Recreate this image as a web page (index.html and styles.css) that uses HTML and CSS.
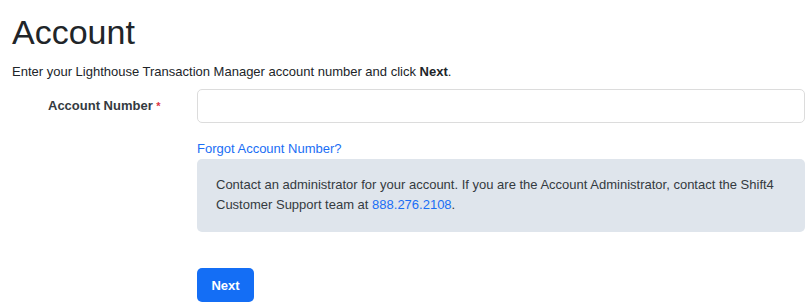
FILE: index.html
```html
<!DOCTYPE html>
<html lang="en">
  <head>
    <meta charset="UTF-8" />
    <meta name="viewport" content="width=device-width, initial-scale=1.0" />
    <title>Account</title>
    <link rel="stylesheet" href="styles.css">
  </head>
  <body>
    <div class="page">
      <h1>Account</h1>
      <p class="intro">
        Enter your Lighthouse Transaction Manager account number and click
        <strong>Next</strong>.
      </p>

      <form class="account-form" onsubmit="return false">
        <div class="form-row">
          <label for="accountNumber" class="form-label">
            Account Number <span class="required">*</span>
          </label>
          <div class="form-field">
            <input id="accountNumber" type="text" class="text-input" />
          </div>
        </div>

        <div class="form-row">
          <div class="form-label"></div>
          <div class="form-field">
            <a href="#" class="forgot-link">Forgot Account Number?</a>
            <div class="info-box">
              Contact an administrator for your account. If you are the Account
              Administrator, contact the Shift4 Customer Support team at
              <a href="#" class="phone">888.276.2108</a>.
            </div>
            <button type="submit" class="next-btn">Next</button>
          </div>
        </div>
      </form>
    </div>
  </body>
</html>
```

FILE: styles.css
```css
body {
  margin: 0;
  font-family: "Liberation Sans", Arial, sans-serif;
  color: #212529;
  background: white;
}
.page {
  padding: 8px 5px 0 12px;
}
h1 {
  margin: 0;
  font-size: 34px;
  font-weight: normal;
  line-height: 48px;
  color: #212529;
}
.intro {
  margin: 6px 0 0 0;
  font-size: 13px;
  line-height: 20px;
}
.intro strong {
  font-weight: bold;
}
.account-form {
  margin-top: 7px;
}
.form-row {
  display: flex;
}
.form-label {
  width: 185px;
  flex-shrink: 0;
  padding-left: 36px;
  box-sizing: border-box;
  font-size: 13px;
  font-weight: bold;
  line-height: 34px;
  color: #343a40;
}
.required {
  color: #dc3545;
  font-size: 11px;
}
.form-field {
  flex: 1;
  min-width: 0;
}
.text-input {
  display: block;
  width: 100%;
  height: 34px;
  box-sizing: border-box;
  border: 1px solid #dcdcdc;
  border-radius: 5px;
  padding: 6px 10px;
  font-family: inherit;
  font-size: 13px;
}
.forgot-link {
  display: inline-block;
  margin-top: 18px;
  font-size: 13px;
  line-height: 16px;
  color: #1a6ef5;
  text-decoration: none;
}
.info-box {
  margin-top: 2px;
  padding: 16px 19px 17px 19px;
  background: #dfe5ec;
  border-radius: 5px;
  font-size: 13px;
  line-height: 20px;
  color: #343a40;
}
.phone {
  color: #1a6ef5;
  text-decoration: none;
}
.next-btn {
  display: block;
  margin-top: 36px;
  width: 57px;
  height: 34px;
  border: none;
  border-radius: 5px;
  background: #146ef5;
  color: white;
  font-family: inherit;
  font-size: 13px;
  font-weight: bold;
  cursor: pointer;
}
```
